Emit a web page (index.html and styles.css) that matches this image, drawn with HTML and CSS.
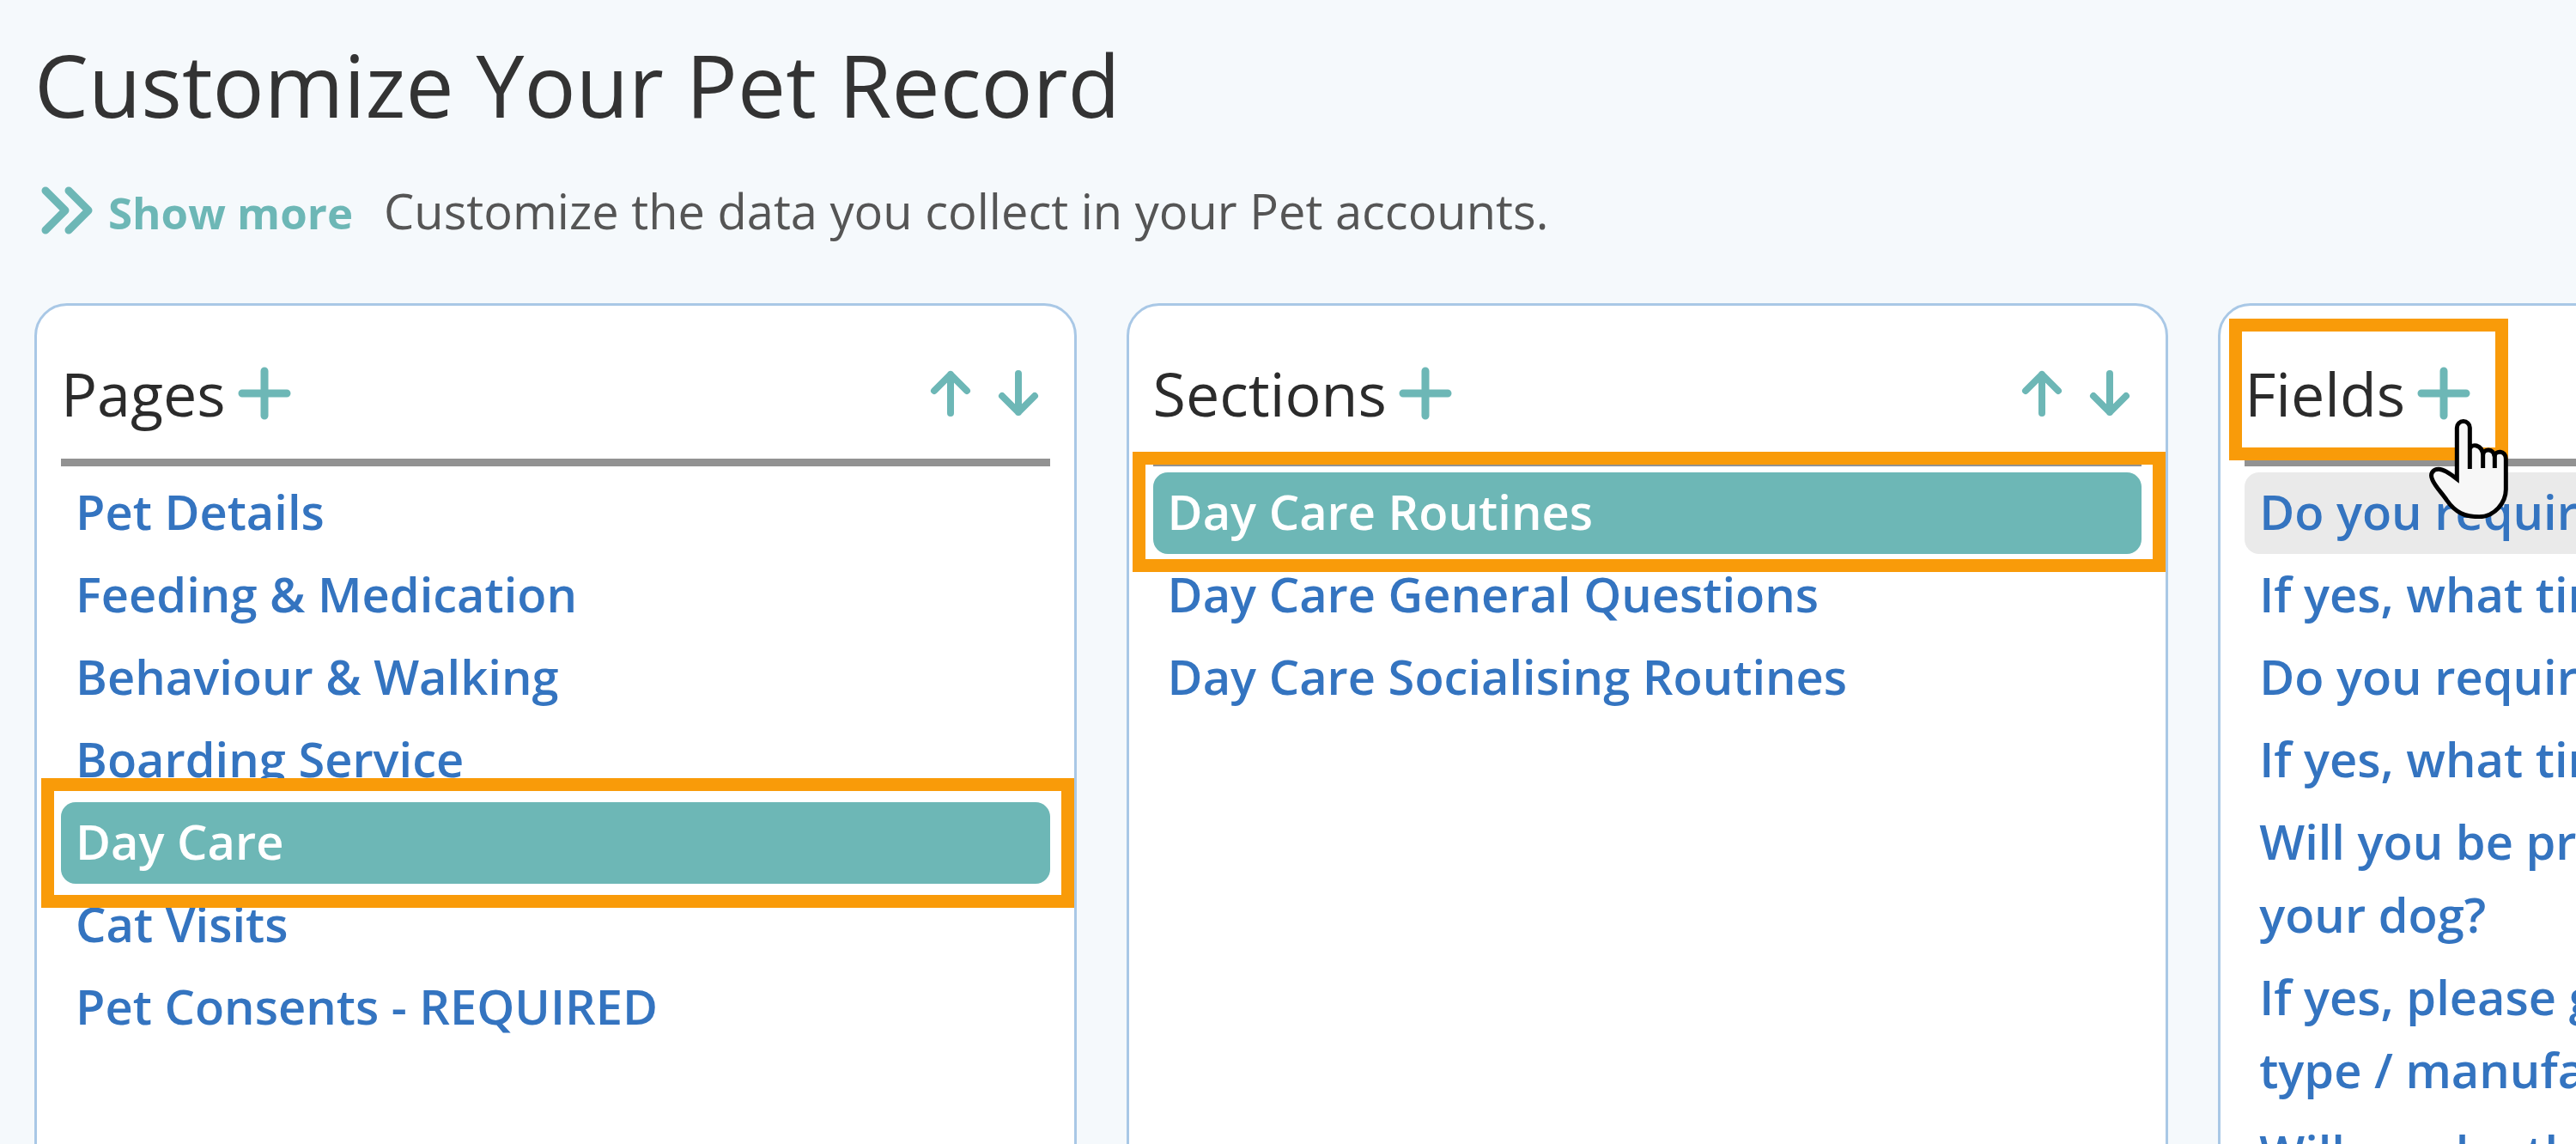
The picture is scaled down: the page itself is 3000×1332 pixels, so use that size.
FILE: index.html
```html
<!DOCTYPE html>
<html lang="en">
  <head>
    <meta charset="UTF-8" />
    <meta name="viewport" content="width=device-width, initial-scale=1.0" />
    <title>Customize Your Pet Record</title>
    <link rel="stylesheet" href="styles.css">
  </head>
  <body>
    <header class="page-header">
      <h1>Customize Your Pet Record</h1>
      <div class="intro">
        <button class="show-more">
          <svg class="icon-more" viewBox="0 0 60 56">
            <path d="M5 5 L28 28 L5 51 M32 5 L55 28 L32 51" />
          </svg>Show more
        </button>
        <p>Customize the data you collect in your Pet accounts.</p>
      </div>
    </header>

    <main class="board">
      <section class="card">
        <div class="card-header">
          <div class="card-title">
            <h2>Pages</h2>
            <button class="icon-btn" aria-label="Add page">
              <svg class="icon-plus" viewBox="0 0 62 62"><path d="M31 5 V57 M5 31 H57" /></svg>
            </button>
          </div>
          <div class="sort-buttons">
            <button class="icon-btn" aria-label="Move page up">
              <svg class="icon-arrow" viewBox="0 0 48 54"><path d="M24 50 V5 M5 24 L24 5 L43 24" /></svg>
            </button>
            <button class="icon-btn" aria-label="Move page down">
              <svg class="icon-arrow" viewBox="0 0 48 54"><path d="M24 4 V49 M5 30 L24 49 L43 30" /></svg>
            </button>
          </div>
        </div>
        <ul class="item-list">
          <li><a href="#">Pet Details</a></li>
          <li><a href="#">Feeding &amp; Medication</a></li>
          <li><a href="#">Behaviour &amp; Walking</a></li>
          <li><a href="#">Boarding Service</a></li>
          <li class="marked"><a href="#" class="selected">Day Care</a></li>
          <li><a href="#">Cat Visits</a></li>
          <li><a href="#">Pet Consents - REQUIRED</a></li>
        </ul>
      </section>

      <section class="card">
        <div class="card-header">
          <div class="card-title">
            <h2>Sections</h2>
            <button class="icon-btn" aria-label="Add section">
              <svg class="icon-plus" viewBox="0 0 62 62"><path d="M31 5 V57 M5 31 H57" /></svg>
            </button>
          </div>
          <div class="sort-buttons">
            <button class="icon-btn" aria-label="Move section up">
              <svg class="icon-arrow" viewBox="0 0 48 54"><path d="M24 50 V5 M5 24 L24 5 L43 24" /></svg>
            </button>
            <button class="icon-btn" aria-label="Move section down">
              <svg class="icon-arrow" viewBox="0 0 48 54"><path d="M24 4 V49 M5 30 L24 49 L43 30" /></svg>
            </button>
          </div>
        </div>
        <ul class="item-list">
          <li class="marked marked-tight"><a href="#" class="selected">Day Care Routines</a></li>
          <li><a href="#">Day Care General Questions</a></li>
          <li><a href="#">Day Care Socialising Routines</a></li>
        </ul>
      </section>

      <section class="card">
        <div class="card-header">
          <div class="card-title marked-title">
            <h2>Fields</h2>
            <button class="icon-btn" aria-label="Add field">
              <svg class="icon-plus" viewBox="0 0 62 62"><path d="M31 5 V57 M5 31 H57" /></svg>
            </button>
            <svg class="hand" viewBox="0 0 276 348">
              <path d="M142 174 V30 A22 22 0 0 0 97 30 V209 C76 193 53 175 33 175 C12 175 2 191 11 211 C21 236 45 258 62 284 C91 326 125 341 175 341 C228 341 268 292 268 246 V139 C268 108 230 108 228 130 C226 102 190 102 188 124 C184 88 148 84 142 104" />
              <path d="M188 171 V116 M229 171 V124" />
            </svg>
          </div>
        </div>
        <ul class="item-list">
          <li><a href="#" class="hovered">Do you require an early drop off?</a></li>
          <li><a href="#">If yes, what time?</a></li>
          <li><a href="#">Do you require a late pick up?</a></li>
          <li><a href="#">If yes, what time?</a></li>
          <li><a href="#">Will you be providing the food for<br>your dog?</a></li>
          <li><a href="#">If yes, please give details of the<br>type / manufacturer</a></li>
          <li><a href="#">Will you be there at drop off?</a></li>
        </ul>
      </section>
    </main>
  </body>
</html>
```
FILE: styles.css
```css
* {
  box-sizing: border-box;
  margin: 0;
  padding: 0;
}

body {
  font-family: "Open Sans", sans-serif;
  font-size: 56px;
  line-height: 85px;
  background: #f5f9fc;
  color: #555;
  height: 100vh;
  padding: 38px 0 0 40px;
  overflow: hidden;
}

button {
  background: none;
  border: none;
  font: inherit;
  color: #6db7b6;
  cursor: pointer;
}

svg {
  display: block;
  fill: none;
  stroke: #6db7b6;
  stroke-width: 9;
  stroke-linecap: round;
  stroke-linejoin: round;
}

h1 {
  font-size: 100px;
  line-height: 120px;
  font-weight: 400;
  color: #333;
  margin-bottom: 45px;
}

.intro {
  display: flex;
  align-items: baseline;
  gap: 36px;
  margin-bottom: 65px;
}

.show-more {
  padding-left: 8px;
  font-size: 51px;
  line-height: 60px;
  font-weight: 700;
}

.icon-more {
  display: inline-block;
  width: 60px;
  height: 56px;
  margin-right: 18px;
  vertical-align: -6px;
}

.board {
  display: flex;
  gap: 58px;
  min-height: 100vh;
}

.card {
  flex: 0 0 41%;
  background: #fff;
  border: 3px solid #a9c8e6;
  border-radius: 38px;
  padding: 51px 28px 28px;
}

.card-header {
  display: flex;
  justify-content: space-between;
  align-items: center;
  padding-bottom: 25px;
  border-bottom: 9px solid #929292;
  margin-bottom: 7px;
}

.card-title {
  display: flex;
  align-items: center;
  gap: 14px;
}

h2 {
  font-size: 70px;
  line-height: 102px;
  font-weight: 400;
  color: #2b2b2b;
}

.icon-plus {
  width: 62px;
  height: 62px;
}

.sort-buttons {
  display: flex;
  gap: 31px;
  padding-right: 13px;
}

.icon-arrow {
  width: 48px;
  height: 54px;
  stroke-width: 8;
}

.item-list {
  list-style: none;
  display: flex;
  flex-direction: column;
}

.item-list li + li {
  margin-top: 1px;
}

.item-list a {
  display: block;
  padding: 3px 17px 7px;
  border-radius: 17px;
  color: #3474c0;
  font-weight: 600;
  text-decoration: none;
}

.item-list a.hovered {
  background: #eaeaea;
}

.item-list a.selected {
  background: #6db7b6;
  color: #fff;
}

/* orange frames over the chosen items */
.marked,
.marked-title {
  position: relative;
}

.marked::after,
.marked-title::after {
  content: "";
  position: absolute;
  inset: -28px -28px -28px -23px;
  border: 15px solid #f99b09;
  z-index: 1;
  pointer-events: none;
}

.marked-tight::after {
  inset: -24px -28px -21px -24px;
}

.marked-title::after {
  inset: -36px -44px -27px -18px;
}

.hand {
  position: absolute;
  top: 81px;
  right: -44px;
  width: 92px;
  height: 116px;
  z-index: 2;
  fill: #f7f7f7;
  stroke: #000;
  stroke-width: 15;
  stroke-linecap: butt;
  stroke-linejoin: miter;
  pointer-events: none;
}
```
